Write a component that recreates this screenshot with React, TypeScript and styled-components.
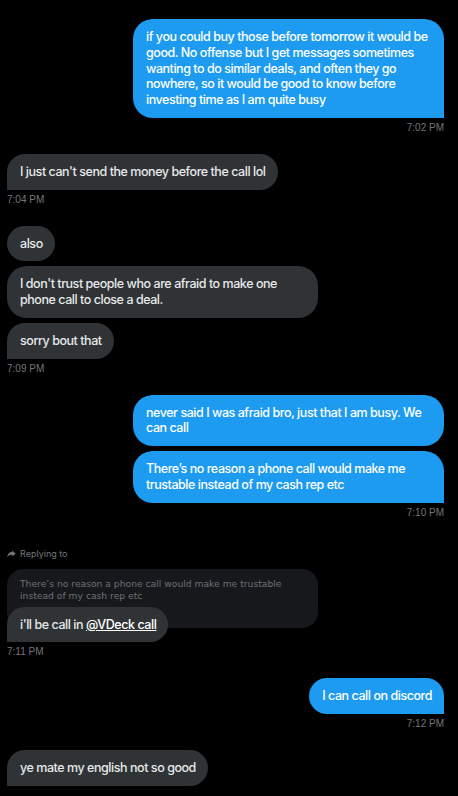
import React from "react";
import styled, { createGlobalStyle } from "styled-components";

type Side = "sent" | "received";

const GlobalStyle = createGlobalStyle`
  html, body {
    margin: 0;
    padding: 0;
    background: #000;
  }
  body {
    font-family: Inter, Roboto, "Liberation Sans", sans-serif;
    -webkit-font-smoothing: antialiased;
  }
`;

const Thread = styled.div`
  width: 458px;
  height: 796px;
  overflow: hidden;
  box-sizing: border-box;
  padding: 19px 14px 0 7px;
  display: flex;
  flex-direction: column;
  gap: 20px;
  background: #000;
`;

const GroupBox = styled.div<{ $side: Side }>`
  display: flex;
  flex-direction: column;
  align-items: ${(p) => (p.$side === "sent" ? "flex-end" : "flex-start")};
  gap: 5px;
`;

const Bubble = styled.div<{ $side: Side; $last: boolean; $overlap: boolean }>`
  max-width: 311px;
  box-sizing: border-box;
  padding: 10px 12px 10px 13px;
  font-size: 12.5px;
  line-height: 15.75px;
  font-weight: 500;
  letter-spacing: -0.45px;
  color: ${(p) => (p.$side === "sent" ? "#ffffff" : "#e7e9ea")};
  background: ${(p) => (p.$side === "sent" ? "#1d9bf0" : "#2f3336")};
  border-radius: 20px;
  ${(p) =>
    p.$last && p.$side === "sent" ? "border-bottom-right-radius: 0;" : ""}
  ${(p) =>
    p.$last && p.$side === "received" ? "border-bottom-left-radius: 0;" : ""}
  ${(p) => (p.$overlap ? "margin-top: -26px; position: relative;" : "")}
`;

const Mention = styled.span`
  text-decoration: underline;
  color: #ffffff;
`;

const Time = styled.div`
  font-size: 10px;
  line-height: 12px;
  color: #71767b;
  margin-top: -1px;
  font-family: "Liberation Sans", Arial, sans-serif;
`;

const ReplyLabel = styled.div`
  display: flex;
  align-items: center;
  gap: 4px;
  font-size: 9px;
  line-height: 11px;
  color: #71767b;
  margin-top: 9px;
  margin-bottom: 5px;
`;

const Quote = styled.div`
  width: 311px;
  box-sizing: border-box;
  padding: 9px 13px 26px;
  border-radius: 16px;
  background: #16181c;
  color: #6e7175;
  font-size: 9.2px;
  line-height: 12px;
  font-family: "DejaVu Sans", Verdana, sans-serif;
`;

interface Message {
  id: number;
  text: React.ReactNode;
}

interface Group {
  side: Side;
  time: string;
  messages: Message[];
  reply?: string;
}

const groups: Group[] = [
  {
    side: "sent",
    time: "7:02 PM",
    messages: [
      {
        id: 1,
        text: "if you could buy those before tomorrow it would be good. No offense but I get messages sometimes wanting to do similar deals, and often they go nowhere, so it would be good to know before investing time as I am quite busy",
      },
    ],
  },
  {
    side: "received",
    time: "7:04 PM",
    messages: [
      { id: 2, text: "I just can't send the money before the call lol" },
    ],
  },
  {
    side: "received",
    time: "7:09 PM",
    messages: [
      { id: 3, text: "also" },
      {
        id: 4,
        text: "I don't trust people who are afraid to make one phone call to close a deal.",
      },
      { id: 5, text: "sorry bout that" },
    ],
  },
  {
    side: "sent",
    time: "7:10 PM",
    messages: [
      {
        id: 6,
        text: "never said I was afraid bro, just that I am busy. We can call",
      },
      {
        id: 7,
        text: "There\u2019s no reason a phone call would make me trustable instead of my cash rep etc",
      },
    ],
  },
  {
    side: "received",
    time: "7:11 PM",
    reply:
      "There\u2019s no reason a phone call would make me trustable instead of my cash rep etc",
    messages: [
      {
        id: 8,
        text: (
          <>
            i'll be call in <Mention>@VDeck call</Mention>
          </>
        ),
      },
    ],
  },
  {
    side: "sent",
    time: "7:12 PM",
    messages: [{ id: 9, text: "I can call on discord" }],
  },
  {
    side: "received",
    time: "",
    messages: [{ id: 10, text: "ye mate my english not so good" }],
  },
];

function ReplyIcon() {
  return (
    <svg width="9" height="9" viewBox="0 0 24 24" fill="#71767b">
      <path d="M14 4l9 8-9 8v-5C7 15 3 17 1 22c0-8 4-14 13-15V4z" />
    </svg>
  );
}

function App() {
  return (
    <>
      <GlobalStyle />
      <Thread>
        {groups.map((group, gi) => (
          <GroupBox key={gi} $side={group.side}>
            {group.reply && (
              <>
                <ReplyLabel>
                  <ReplyIcon />
                  Replying to
                </ReplyLabel>
                <Quote>{group.reply}</Quote>
              </>
            )}
            {group.messages.map((m, i) => (
              <Bubble
                key={m.id}
                $side={group.side}
                $last={i === group.messages.length - 1}
                $overlap={!!group.reply && i === 0}
              >
                {m.text}
              </Bubble>
            ))}
            {group.time && <Time>{group.time}</Time>}
          </GroupBox>
        ))}
      </Thread>
    </>
  );
}

export default App;
